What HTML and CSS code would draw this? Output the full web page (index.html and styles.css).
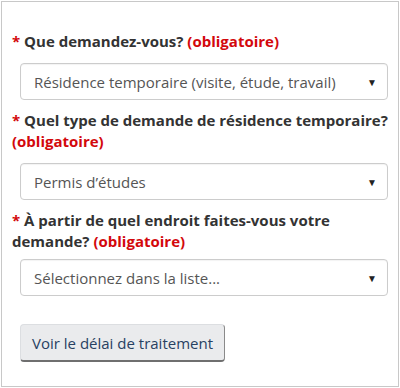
FILE: index.html
```html
<!DOCTYPE html>
<html lang="fr">
<head>
    <meta charset="UTF-8">
    <meta name="viewport" content="width=device-width, initial-scale=1.0">
    <title>Délais de traitement</title>
    <link rel="stylesheet" href="styles.css">
</head>
<body>
    <div class="panel">
        <div class="field">
            <label class="field-label">
                <span class="req">*</span> Que demandez-vous? <strong class="req">(obligatoire)</strong>
            </label>
            <div class="select">
                <span class="select-text">Résidence temporaire (visite, étude, travail)</span>
                <span class="select-arrow">&#9660;</span>
            </div>
        </div>

        <div class="field">
            <label class="field-label">
                <span class="req">*</span> Quel type de demande de résidence temporaire?
                <strong class="req">(obligatoire)</strong>
            </label>
            <div class="select">
                <span class="select-text">Permis d’études</span>
                <span class="select-arrow">&#9660;</span>
            </div>
        </div>

        <div class="field field-last">
            <label class="field-label">
                <span class="req">*</span> À partir de quel endroit faites-vous votre<br>
                demande? <strong class="req">(obligatoire)</strong>
            </label>
            <div class="select">
                <span class="select-text">Sélectionnez dans la liste...</span>
                <span class="select-arrow">&#9660;</span>
            </div>
        </div>

        <button class="btn">Voir le délai de traitement</button>
    </div>
</body>
</html>
```

FILE: styles.css
```css
* {
    margin: 0;
    padding: 0;
    box-sizing: border-box;
}

body {
    font-family: "Open Sans", "Noto Sans", sans-serif;
    background: #ffffff;
    color: #333333;
    padding: 1px 1px 0 1px;
}

.panel {
    border: 1px solid #c8c8c8;
    height: 386px;
    padding: 29px 10px 0 10px;
}

.field {
    margin-bottom: 10px;
}

.field-label {
    display: block;
    font-size: 15px;
    font-weight: 700;
    line-height: 21px;
    color: #333333;
    margin-bottom: 11px;
}

.field-last {
    margin-top: 4px;
}

.field-last .field-label {
    margin-bottom: 7px;
}

.req {
    color: #d3080c;
    font-weight: 700;
}

.select {
    display: flex;
    align-items: center;
    justify-content: space-between;
    height: 37px;
    margin-left: 8px;
    padding: 0 10px 0 13px;
    border: 1px solid #cccccc;
    border-radius: 4px;
    background: #ffffff;
    box-shadow: inset 0 1px 1px rgba(0, 0, 0, 0.05);
}

.select-text {
    font-size: 15px;
    color: #555555;
}

.select-arrow {
    font-size: 10px;
    color: #222222;
}

.btn {
    margin: 18px 0 0 8px;
    height: 38px;
    padding: 0 11px;
    font-family: inherit;
    font-size: 15px;
    color: #284162;
    background: #eaebed;
    border: 1px solid #dcdee1;
    border-bottom: 2px solid #6f6f6f;
    border-right-color: #8a8a8a;
    border-radius: 4px;
}
```
